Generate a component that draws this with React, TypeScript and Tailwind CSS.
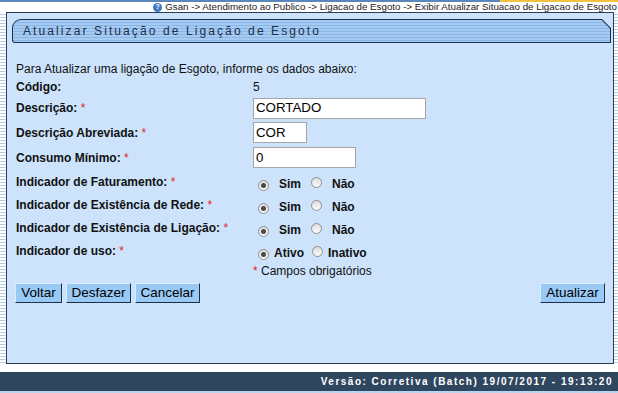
import React from "react";

function Radio({ checked }: { checked?: boolean }) {
  return (
    <span className="inline-flex w-[11px] h-[11px] rounded-full border border-[#8f8f8f] bg-[linear-gradient(#dcdcdc,#fbfbfb)] items-center justify-center shrink-0">
      {checked ? <span className="w-[5px] h-[5px] rounded-full bg-[#4a4a4a]" /> : null}
    </span>
  );
}

function Req() {
  return <span className="text-[#e02424] font-normal"> *</span>;
}

function Label({ children }: { children: React.ReactNode }) {
  return <div className="w-[237px] shrink-0 font-bold">{children}</div>;
}

function Btn({ children, w }: { children: React.ReactNode; w: string }) {
  return (
    <button
      className={`${w} h-[20px] bg-[#99c9f5] border border-[#1e2f48] border-t-[#d9ecff] border-l-[#d9ecff] text-[13.5px] leading-[14px] text-black flex items-center justify-center`}
    >
      {children}
    </button>
  );
}

function YesNo() {
  return (
    <div className="flex items-center mt-[5px] font-bold">
      <span className="ml-[5px]"><Radio checked /></span>
      <span className="ml-[10px]">Sim</span>
      <span className="ml-[10px]"><Radio /></span>
      <span className="ml-[10px]">Não</span>
    </div>
  );
}

export default function App() {
  const stripes =
    "bg-[repeating-linear-gradient(to_bottom,#ffffff_0px,#ffffff_2px,#b7cfe6_2px,#b7cfe6_3px)]";
  return (
    <div className="w-[618px] h-[393px] bg-white overflow-hidden font-['Liberation_Sans',Arial,sans-serif] text-[12px] text-[#111]">
      <div className="flex h-[2px]">
        <div className="w-[500px] bg-[#5b86b8]" />
        <div className="flex-1 bg-[#f2c23c]" />
      </div>
      <div className="h-[10px] flex justify-end items-center pr-[1px] text-[9.75px] leading-[10px] text-[#222]">
        <span className="inline-flex w-[9px] h-[9px] rounded-full bg-[#3f78c4] text-white text-[7px] font-bold items-center justify-center mr-[3px]">?</span>
        <span>Gsan -&gt; Atendimento ao Publico -&gt; Ligacao de Esgoto -&gt; Exibir Atualizar Situacao de Ligacao de Esgoto</span>
      </div>
      <div className="flex h-[352px]">
        <div className={`w-[6px] ${stripes}`} />
        <div className="w-[608px] border border-[#2b3d55] bg-[#cce3fb] flex flex-col">
          <div className="ml-[5px] mt-[6px] w-[599px] h-[24px] bg-[#1d2f48] p-[1px] rounded-tl-[9px] rounded-bl-[3px] [clip-path:polygon(0_0,calc(100%-9px)_0,100%_9px,100%_100%,0_100%)]">
            <div className="w-full h-full rounded-tl-[8px] rounded-bl-[2px] bg-[repeating-linear-gradient(to_bottom,#a6cbf2_0px,#a6cbf2_2px,#8ab5e6_2px,#8ab5e6_3px)] [clip-path:polygon(0_0,calc(100%-8.5px)_0,100%_8.5px,100%_100%,0_100%)] flex items-center pl-[10px] text-[12px] tracking-[2.1px] text-[#1d2f48]">
              Atualizar Situação de Ligação de Esgoto
            </div>
          </div>
          <div className="mt-[17px] pl-[9px] pr-[9px] flex flex-col">
            <div className="h-[17px] flex items-center">Para Atualizar uma ligação de Esgoto, informe os dados abaixo:</div>
            <div className="h-[19px] flex items-center">
              <Label>Código:</Label>
              <span>5</span>
            </div>
            <div className="h-[24px] flex items-center">
              <Label>Descrição:<Req /></Label>
              <div className="w-[173px] h-[21px] border border-[#a5a5a5] bg-white flex items-center px-[2px] text-[13.3px] text-black">CORTADO</div>
            </div>
            <div className="h-[25px] flex items-center">
              <Label>Descrição Abreviada:<Req /></Label>
              <div className="w-[54px] h-[21px] border border-[#a5a5a5] bg-white flex items-center px-[2px] text-[13.3px] text-black">COR</div>
            </div>
            <div className="h-[25px] flex items-center">
              <Label>Consumo Mínimo:<Req /></Label>
              <div className="w-[103px] h-[21px] border border-[#a5a5a5] bg-white flex items-center px-[2px] text-[13.3px] text-black">0</div>
            </div>
            <div className="h-[23px] flex items-center">
              <Label>Indicador de Faturamento:<Req /></Label>
              <YesNo />
            </div>
            <div className="h-[23px] flex items-center">
              <Label>Indicador de Existência de Rede:<Req /></Label>
              <YesNo />
            </div>
            <div className="h-[23px] flex items-center">
              <Label>Indicador de Existência de Ligação:<Req /></Label>
              <YesNo />
            </div>
            <div className="h-[23px] flex items-center">
              <Label>Indicador de uso:<Req /></Label>
              <div className="flex items-center mt-[5px] font-bold">
                <span className="ml-[5px]"><Radio checked /></span>
                <span className="ml-[5px]">Ativo</span>
                <span className="ml-[8px]"><Radio /></span>
                <span className="ml-[5px]">Inativo</span>
              </div>
            </div>
            <div className="h-[18px] flex items-center">
              <div className="w-[237px] shrink-0" />
              <span><span className="text-[#e02424]">*</span> Campos obrigatórios</span>
            </div>
            <div className="mt-[3px] flex items-center -ml-[1px] -mr-[1px]">
              <div className="flex gap-[4px]">
                <Btn w="w-[47px]">Voltar</Btn>
                <Btn w="w-[65px]">Desfazer</Btn>
                <Btn w="w-[65px]">Cancelar</Btn>
              </div>
              <div className="flex-1" />
              <Btn w="w-[65px]">Atualizar</Btn>
            </div>
          </div>
        </div>
        <div className={`w-[4px] ${stripes}`} />
      </div>
      <div className="h-[8px] bg-white" />
      <div className="h-[19px] bg-[#2f465f] flex items-center justify-end pr-[5px] text-white font-bold text-[10px] tracking-[1.5px]">
        Versão: Corretiva (Batch) 19/07/2017 - 19:13:20
      </div>
      <div className="h-[2px] bg-[#b9d5ee]" />
    </div>
  );
}
